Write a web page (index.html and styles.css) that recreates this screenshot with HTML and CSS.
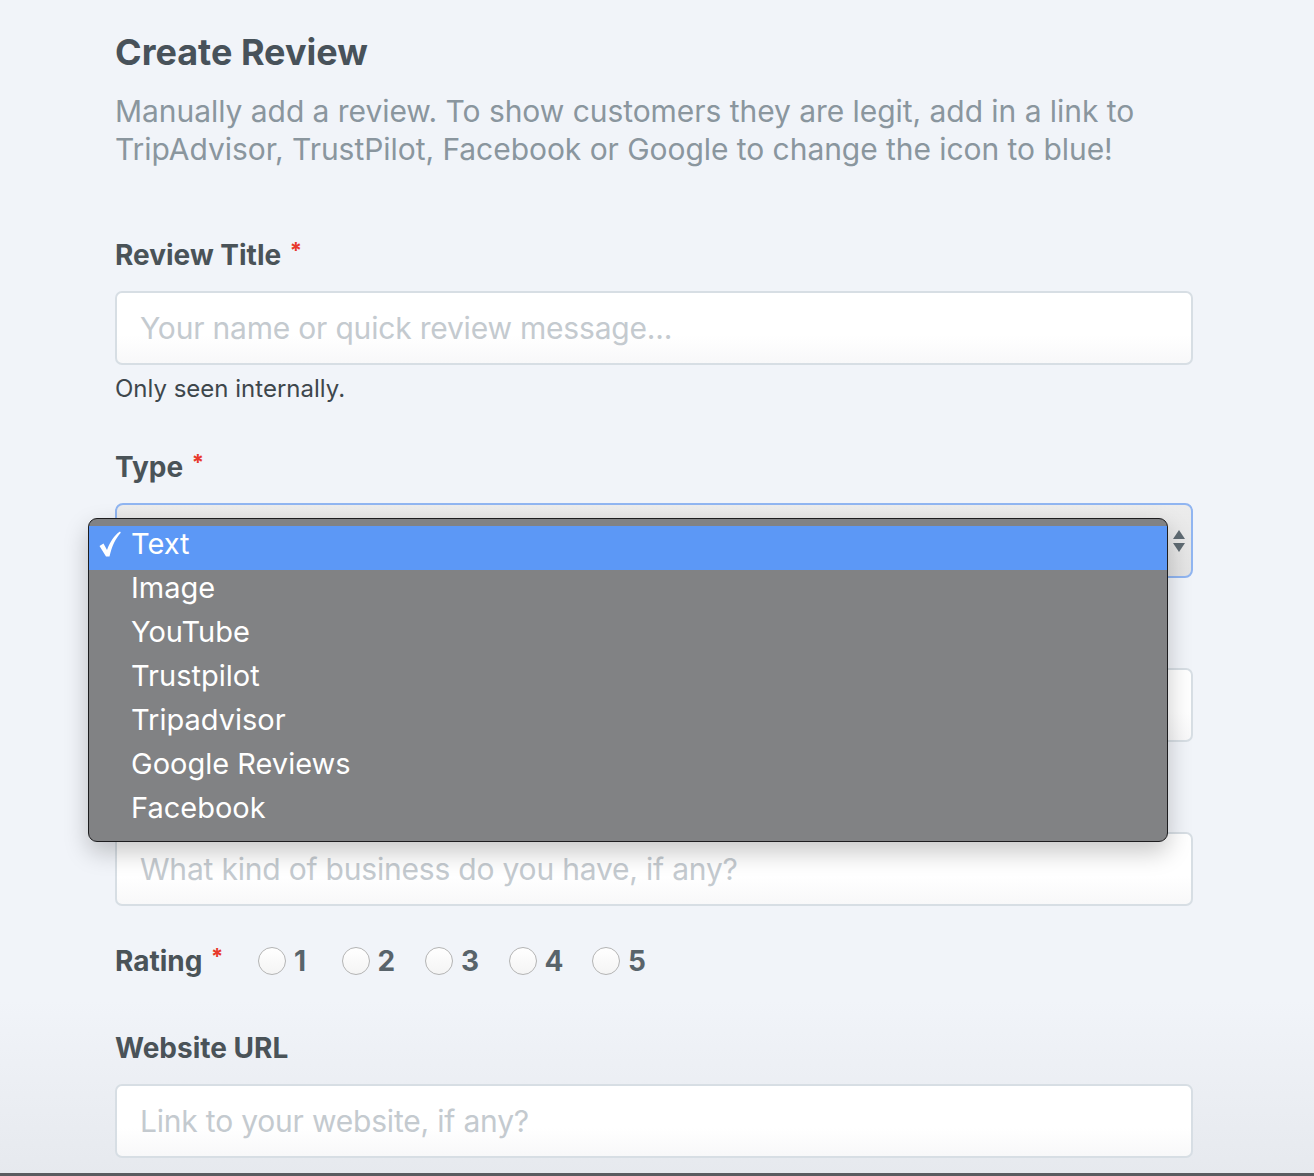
FILE: index.html
```html
<!DOCTYPE html>
<html lang="en">
<head>
<meta charset="utf-8">
<title>Create Review</title>
<link rel="stylesheet" href="styles.css">
</head>
<body>
<main class="page">
  <h1 class="title">Create Review</h1>
  <p class="intro">Manually add a review. To show customers they are legit, add in a link to TripAdvisor, TrustPilot, Facebook or Google to change the icon to blue!</p>

  <div class="field">
    <label class="label">Review Title <span class="req">*</span></label>
    <div class="input"><span class="ph">Your name or quick review message...</span></div>
    <p class="help">Only seen internally.</p>
  </div>

  <div class="field">
    <label class="label">Type <span class="req">*</span></label>
    <div class="select-wrap">
      <div class="select">
        <span class="arrows">
          <svg width="14" height="26" viewBox="0 0 14 26"><path d="M7 2 L13 11 L1 11 Z" fill="#5f6b73"/><path d="M1 15 L13 15 L7 24 Z" fill="#5f6b73"/></svg>
        </span>
      </div>
      <ul class="menu">
        <li class="opt sel"><svg class="check" width="22" height="26" viewBox="0 0 22 26"><path d="M0.5 15 L4.5 12.5 L8 19 C11 11 15 4.5 21 0.5 L21.8 1.8 C16.5 7.5 13 15 10.5 25.5 L7 25.5 Z" fill="#ffffff"/></svg>Text</li>
        <li class="opt">Image</li>
        <li class="opt">YouTube</li>
        <li class="opt">Trustpilot</li>
        <li class="opt">Tripadvisor</li>
        <li class="opt">Google Reviews</li>
        <li class="opt">Facebook</li>
      </ul>
    </div>
  </div>

  <div class="field">
    <span class="label spacer"></span>
    <div class="input"></div>
  </div>

  <div class="field">
    <span class="label spacer"></span>
    <div class="input"><span class="ph">What kind of business do you have, if any?</span></div>
  </div>

  <div class="rating">
    <span class="label">Rating <span class="req">*</span></span>
    <div class="radios">
      <label class="radio"><span class="circle"></span>1</label>
      <label class="radio"><span class="circle"></span>2</label>
      <label class="radio"><span class="circle"></span>3</label>
      <label class="radio"><span class="circle"></span>4</label>
      <label class="radio"><span class="circle"></span>5</label>
    </div>
  </div>

  <div class="field">
    <label class="label">Website URL</label>
    <div class="input"><span class="ph">Link to your website, if any?</span></div>
  </div>
</main>
</body>
</html>
```

FILE: styles.css
```css
html, body {
  margin: 0;
  padding: 0;
}
body {
  background: linear-gradient(180deg, #f1f4f9 0%, #f1f4f9 85%, #e6e9ee 100%);
  min-height: 1176px;
  font-family: "Inter", "Noto Sans", sans-serif;
  color: #4a5358;
  overflow: hidden;
}
body::after {
  content: "";
  position: fixed;
  left: 0;
  right: 0;
  bottom: 0;
  height: 3px;
  background: #5a5c60;
}
.page {
  width: 1078px;
  padding: 26px 0 0 115px;
}
.title {
  margin: 0;
  font-size: 36px;
  line-height: 52px;
  font-weight: 700;
  color: #48525a;
}
.intro {
  margin: 14px 0 0;
  font-size: 30px;
  line-height: 38px;
  color: #8a969e;
  letter-spacing: -0.05px;
}
.field {
  margin-top: 36px;
}
.field:first-of-type {
  margin-top: 69px;
}
.label {
  display: block;
  font-size: 28px;
  line-height: 36px;
  font-weight: 700;
  color: #4a5358;
  margin-bottom: 18px;
}
.spacer {
  height: 36px;
}
.req {
  position: relative;
  top: -7px;
  color: #e8392b;
  font-size: 22px;
  line-height: 0;
  margin-left: 2px;
}
.input {
  box-sizing: border-box;
  height: 74px;
  border: 2px solid #d7dee4;
  border-radius: 7px;
  background: linear-gradient(180deg, #ffffff 0%, #ffffff 60%, #f8f8f9 100%);
  display: flex;
  align-items: center;
  padding-left: 23px;
}
.ph {
  font-size: 30px;
  color: #c4cacf;
  letter-spacing: -0.2px;
}
.help {
  margin: 9px 0 0;
  padding-bottom: 9px;
  font-size: 24px;
  line-height: 30px;
  color: #3e474c;
}
.select-wrap {
  position: relative;
}
.select {
  box-sizing: border-box;
  height: 75px;
  border: 2px solid #90b5f1;
  border-radius: 8px;
  background: linear-gradient(180deg, #ececec 0%, #e3e3e3 100%);
  display: flex;
  align-items: center;
  justify-content: flex-end;
  padding-right: 5px;
}
.arrows {
  display: flex;
}
.menu {
  position: absolute;
  left: -27px;
  top: 15px;
  width: 1080px;
  box-sizing: border-box;
  margin: 0;
  padding: 7px 0 7px;
  list-style: none;
  background: #818284;
  border: 1px solid #1d1d1f;
  border-radius: 9px;
  box-shadow: 0 10px 24px rgba(0, 0, 0, 0.22);
  z-index: 5;
}
.opt {
  position: relative;
  height: 44px;
  line-height: 36px;
  padding-left: 42px;
  font-size: 29px;
  color: #ffffff;
}
.opt.sel {
  background: #5c98f6;
}
.check {
  position: absolute;
  left: 10px;
  top: 5px;
}
.rating {
  display: flex;
  align-items: center;
  margin-top: 37px;
  height: 36px;
}
.rating .label {
  margin: 0;
  display: inline-block;
  width: 143px;
}
.radios {
  display: flex;
}
.radio {
  display: flex;
  align-items: center;
  gap: 8px;
  width: 83.5px;
  font-size: 28px;
  font-weight: 700;
  color: #59646b;
  line-height: 36px;
}
.circle {
  box-sizing: border-box;
  width: 28px;
  height: 28px;
  border-radius: 50%;
  border: 1.5px solid #b4b4b4;
  background: linear-gradient(180deg, #ffffff, #f4f4f4);
}
.rating + .field {
  margin-top: 51px;
}
```
